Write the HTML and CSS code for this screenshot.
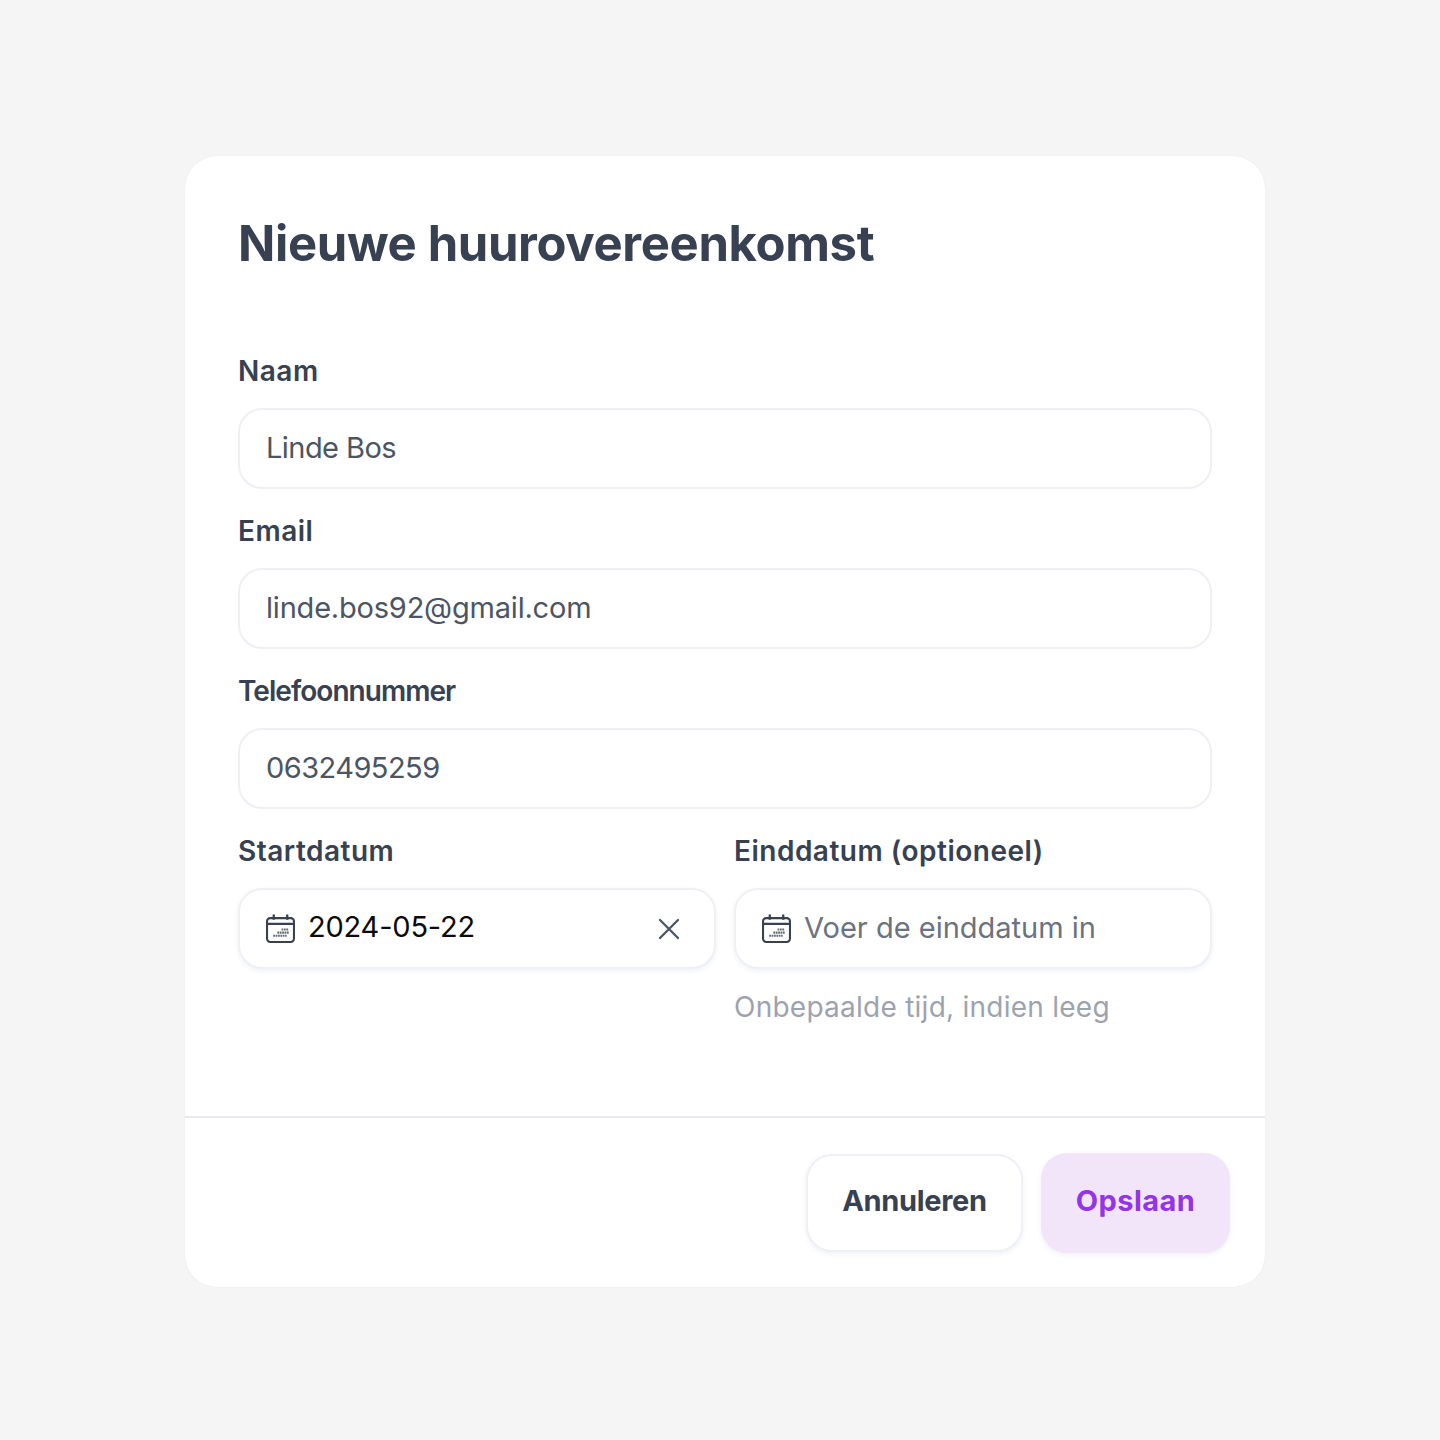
FILE: index.html
```html
<!DOCTYPE html>
<html lang="en">
<head>
    <meta charset="UTF-8">
    <meta name="viewport" content="width=device-width, initial-scale=1.0">
    <title>Nieuwe huurovereenkomst</title>
    <link rel="stylesheet" href="styles.css">
</head>
<body>
    <div class="modal">
        <div class="modal-body">
            <h1>Nieuwe huurovereenkomst</h1>

            <div class="field">
                <label>Naam</label>
                <div class="input input-tight">Linde Bos</div>
            </div>
            <div class="field">
                <label>Email</label>
                <div class="input">linde.bos92@gmail.com</div>
            </div>
            <div class="field">
                <label class="label-tight">Telefoonnummer</label>
                <div class="input input-tight">0632495259</div>
            </div>

            <div class="date-row">
                <div class="field">
                    <label>Startdatum</label>
                    <div class="input date">
                        <svg class="cal" viewBox="0 0 28 28" fill="none" stroke="#374151" stroke-width="2">
                            <rect x="1" y="4" width="26" height="23" rx="3"/>
                            <path d="M1 9.500h26M7.500 0.500v5M20.500 0.500v5" stroke-width="2.200"/>
                            <path d="M15 15h7M11 18h11M7 21h13" stroke-width="2" stroke-dasharray="1.700 0.600" stroke-opacity="0.8"/>
                        </svg>
                        <span class="date-value">2024-05-22</span>
                        <svg class="clear" viewBox="0 0 22 22" fill="none" stroke="#4b5563" stroke-width="2.300" stroke-linecap="round">
                            <path d="M2 2l18 18M20 2L2 20"/>
                        </svg>
                    </div>
                </div>
                <div class="field">
                    <label>Einddatum (optioneel)</label>
                    <div class="input date placeholder">
                        <svg class="cal" viewBox="0 0 28 28" fill="none" stroke="#374151" stroke-width="2">
                            <rect x="1" y="4" width="26" height="23" rx="3"/>
                            <path d="M1 9.500h26M7.500 0.500v5M20.500 0.500v5" stroke-width="2.200"/>
                            <path d="M15 15h7M11 18h11M7 21h13" stroke-width="2" stroke-dasharray="1.700 0.600" stroke-opacity="0.8"/>
                        </svg>
                        <span>Voer de einddatum in</span>
                    </div>
                    <p class="hint">Onbepaalde tijd, indien leeg</p>
                </div>
            </div>
        </div>

        <div class="modal-footer">
            <button class="btn-cancel">Annuleren</button>
            <button class="btn-save">Opslaan</button>
        </div>
    </div>
</body>
</html>
```

FILE: styles.css
```css
* {
    box-sizing: border-box;
}

body {
    font-family: "Inter", "Noto Sans", Arial, sans-serif;
    background-color: #f5f5f5;
    color: #374151;
    margin: 0;
    min-height: 1440px;
    padding: 156px 0 0 185px;
}

.modal {
    width: 1080px;
    height: 1131px;
    background-color: #fff;
    border-radius: 32px;
    box-shadow: 0 0 1px rgba(0, 0, 0, 0.12);
    display: flex;
    flex-direction: column;
}

.modal-body {
    height: 962px;
    padding: 54px 53px 0;
    border-bottom: 2px solid #e9e9ee;
}

h1 {
    margin: 0 0 79px;
    font-size: 49px;
    line-height: 68px;
    font-weight: 700;
    letter-spacing: -0.35px;
    color: #374151;
}

.field {
    margin-bottom: 28px;
}

label {
    display: block;
    height: 59px;
    margin-top: -8px;
    padding-bottom: 1px;
    font-size: 28px;
    line-height: 45px;
    font-weight: 600;
    letter-spacing: 0.5px;
}

.label-tight {
    letter-spacing: -0.95px;
}

.input {
    height: 81px;
    padding: 0 26px 3px;
    display: flex;
    align-items: center;
    background-color: #fff;
    border: 2px solid #eef0f4;
    border-radius: 24px;
    font-size: 29px;
    letter-spacing: -0.2px;
    color: #4b5563;
}

.input-tight {
    letter-spacing: -0.55px;
}

.date-row {
    display: grid;
    grid-template-columns: 478px 478px;
    gap: 18px;
}

.date {
    gap: 13px;
    padding-bottom: 0;
    box-shadow: 0 2px 5px rgba(148, 163, 184, 0.15);
}

.cal {
    width: 29px;
    height: 29px;
    flex-shrink: 0;
}

.date-value {
    color: #0b0b0b;
    flex: 1;
    margin-top: -5px;
}

.clear {
    width: 22px;
    height: 22px;
    margin-right: 8px;
}

.placeholder {
    color: #6b7280;
    letter-spacing: 0;
}

.placeholder span {
    margin-top: -2px;
}

.hint {
    margin: 19px 0 0;
    font-size: 28px;
    line-height: 38px;
    letter-spacing: 0.25px;
    color: #9ca3af;
}

.modal-footer {
    flex: 1;
    display: flex;
    justify-content: flex-end;
    align-items: center;
    gap: 18px;
    padding: 0 35px 0 0;
}

button {
    font-family: inherit;
    font-size: 29px;
    font-weight: 700;
    padding-bottom: 5px;
    border-radius: 26px;
    cursor: pointer;
}

.btn-cancel {
    width: 217px;
    height: 98px;
    background-color: #fff;
    border: 2px solid #eef0f6;
    color: #374151;
    letter-spacing: -0.3px;
    box-shadow: 0 2px 5px rgba(148, 163, 184, 0.15);
}

.btn-save {
    width: 189px;
    height: 100px;
    background-color: #f2e5f9;
    border: none;
    color: #9333ea;
    letter-spacing: 0.4px;
    box-shadow: 0 2px 5px rgba(148, 163, 184, 0.15);
}
```
